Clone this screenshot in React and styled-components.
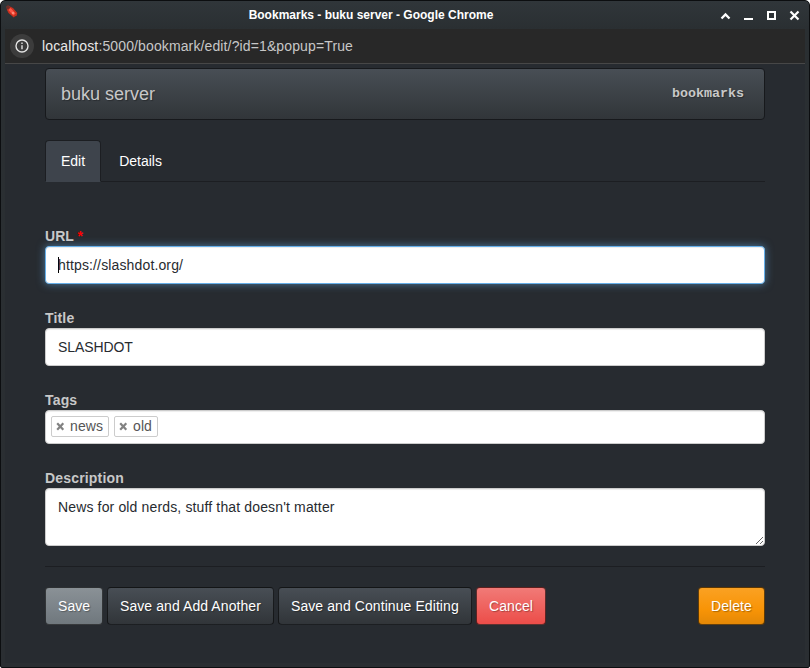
import React from "react";
import styled, { createGlobalStyle, css } from "styled-components";

const GlobalStyle = createGlobalStyle`
  *, *::before, *::after { box-sizing: border-box; }
  html { background: #fff; }
  body {
    margin: 0;
    font: 14px/20px "Liberation Sans", Arial, sans-serif;
    color: #c8c8c8;
  }
`;

const Window = styled.div`
  width: 810px;
  height: 668px;
  display: flex;
  flex-direction: column;
  padding: 0 4px 4px;
  border: 1px solid #0c0e10;
  border-radius: 5px 5px 2px 2px;
  background: linear-gradient(#30363a 0, #2a2f32 28px, #2a2e32 100%);
  overflow: hidden;
`;

const TitleBar = styled.header`
  flex: 0 0 28px;
  display: grid;
  grid-template-columns: 32px 1fr 100px;
  align-items: center;
`;

const TitleText = styled.div`
  text-align: center;
  font-size: 12px;
  line-height: 28px;
  font-weight: bold;
  color: #fff;
  white-space: nowrap;
`;

const BookmarkIcon = styled.svg`
  display: block;
  align-self: start;
  margin-top: 3px;
`;

const WindowControls = styled.svg`
  display: block;
  justify-self: end;
`;

const AddressBar = styled.div`
  flex: 0 0 35px;
  display: flex;
  align-items: center;
  gap: 8px;
  padding-left: 5px;
  background: #282828;
  border-bottom: 1px solid #474747;
`;

const InfoBadge = styled.span`
  width: 24px;
  height: 24px;
  display: grid;
  place-items: center;
  border-radius: 50%;
  background: #3c3c3c;
`;

const Address = styled.span`
  font-size: 14px;
  letter-spacing: 0.125px;
  color: #c7c7c7;
  b { font-weight: normal; color: #e8e8e8; }
`;

const Page = styled.main`
  flex: 1;
  padding: 4px 40px 0;
  background: #272b30;
`;

const Navbar = styled.nav`
  height: 52px;
  display: flex;
  align-items: center;
  justify-content: space-between;
  padding: 0 20px 0 15px;
  border: 1px solid #17191c;
  border-radius: 4px;
  background: linear-gradient(#484e55, #3a3f44 60%, #313539);
  text-shadow: 1px 1px 1px rgba(0, 0, 0, 0.3);
`;

const Brand = styled.span`
  font-size: 18px;
`;

const Database = styled.span`
  font: bold 13.33px/20px "Liberation Mono", monospace;
`;

const Tabs = styled.div`
  display: flex;
  gap: 2px;
  height: 42px;
  margin-top: 20px;
  border-bottom: 1px solid #1c1e22;
`;

const Tab = styled.a`
  height: 42px;
  padding: 10px 15px;
  border: 1px solid transparent;
  border-radius: 4px 4px 0 0;
  color: #fff;
  ${(p) => p.$active && css`
    background: #3e444c;
    border-color: #1c1e22;
    border-bottom-color: #3e444c;
  `}
`;

const Form = styled.form`
  margin: 44px 0 0;
`;

const Field = styled.div`
  margin-bottom: 24px;
  ${(p) => p.$last && css`margin-bottom: 20px;`}
`;

const Label = styled.label`
  display: block;
  font-weight: bold;
  letter-spacing: ${(p) => p.$tracking || "0.17px"};
`;

const Required = styled.strong`
  color: #f00;
`;

const control = css`
  display: block;
  width: 100%;
  margin: 0;
  padding: 8px 12px;
  border: 1px solid #ccc;
  border-radius: 4px;
  background: #fff;
  color: #272b30;
  font: 14px/20px "Liberation Sans", Arial, sans-serif;
  box-shadow: inset 0 1px 1px rgba(0, 0, 0, 0.075);
  outline: 0;
`;

const TextInput = styled.input`
  ${control}
  height: 38px;
  letter-spacing: -0.1px;
`;

const FocusedField = styled.div`
  ${control}
  height: 38px;
  border-color: #66afe9;
  box-shadow: inset 0 1px 1px rgba(0, 0, 0, 0.075), 0 0 8px rgba(102, 175, 233, 0.6);
  display: flex;
  align-items: center;
  letter-spacing: 0.14px;
`;

const Caret = styled.span`
  width: 1px;
  height: 16px;
  margin-right: -1px;
  background: #000;
`;

const TextArea = styled.textarea`
  ${control}
  height: 58px;
  resize: vertical;
  letter-spacing: 0.145px;
`;

const TagBox = styled.div`
  ${control}
  display: flex;
  gap: 5px;
  height: 34px;
  padding: 5px;
`;

const Tag = styled.span`
  display: flex;
  align-items: center;
  height: 21px;
  width: ${(p) => p.$width}px;
  padding: 0 0 0 4px;
  gap: 5px;
  border: 1px solid #ccc;
  border-radius: 2px;
  color: #555;
  line-height: 19px;
  letter-spacing: 0.1px;
`;

const Divider = styled.hr`
  margin: 0 0 20px;
  border: 0;
  border-top: 1px solid #1c1e22;
`;

const Actions = styled.div`
  display: flex;
  gap: 4px;
`;

const tones = {
  save: "linear-gradient(#8a9196, #7a8288 60%, #70787d)",
  plain: "linear-gradient(#484e55, #3a3f44 60%, #313539)",
  danger: "linear-gradient(#f17a77, #ee5f5b 60%, #ec4d49)",
  warning: "linear-gradient(#faa123, #f89406 60%, #e48806)",
};

const Button = styled.button`
  flex: none;
  width: ${(p) => p.$width}px;
  height: 38px;
  margin: 0;
  padding: 0 0 0 12px;
  text-align: left;
  border: 1px solid rgba(0, 0, 0, 0.6);
  border-radius: 4px;
  background: ${(p) => tones[p.$tone]};
  color: #fff;
  font: 14px/20px "Liberation Sans", Arial, sans-serif;
  letter-spacing: 0.08px;
  text-shadow: 1px 1px 1px rgba(0, 0, 0, 0.3);
  white-space: nowrap;
  ${(p) => p.$end && css`margin-left: auto;`}
`;

function TagItem({ width, children }) {
  return (
    <Tag $width={width}>
      <svg width="9" height="9" viewBox="0 0 9 9">
        <path d="M1.2 1.2 7.3 7.8M7.3 1.2 1.2 7.8" stroke="#828282" strokeWidth="2.2" />
      </svg>
      {children}
    </Tag>
  );
}

export default function App() {
  return (
    <>
      <GlobalStyle />
      <Window>
        <TitleBar>
          <BookmarkIcon width="14" height="15" viewBox="0 0 14 15">
            <path d="M1.500 2.500 3 1.500 8 4l4.300 5-.8 3-1.500.2-1.200 1.300L3.500 9 2 6Z" fill="#c8301f" />
            <path d="M4.500 5 9.500 10.500" stroke="#ff5545" strokeWidth="3" />
            <path d="M1.500 2.500 3 1.500 5.500 3 3 5.500 2 5Z" fill="#6e2f2a" />
            <circle cx="8" cy="9" r="1" fill="#ff9a86" />
          </BookmarkIcon>
          <TitleText>Bookmarks - buku server - Google Chrome</TitleText>
          <WindowControls width="90" height="28" viewBox="0 0 90 28" fill="none" stroke="#fff" strokeWidth="2">
            <path d="m6.500 17.500 4-4 4 4" strokeWidth="2.3" />
            <path d="M29 18h9" />
            <path d="M53 11h7v7h-7z" />
            <path d="m75.500 10.500 8 8m0-8-8 8" strokeWidth="2.2" />
          </WindowControls>
        </TitleBar>
        <AddressBar>
          <InfoBadge>
            <svg width="14" height="14" viewBox="0 0 14 14" fill="none" stroke="#e3e3e3" strokeWidth="1.4">
              <circle cx="7" cy="7" r="6" />
              <path d="M7 6.200v4M7 3.600v1.500" />
            </svg>
          </InfoBadge>
          <Address><b>localhost</b>:5000/bookmark/edit/?id=1&amp;popup=True</Address>
        </AddressBar>
        <Page>
          <Navbar>
            <Brand>buku server</Brand>
            <Database>bookmarks</Database>
          </Navbar>
          <Tabs>
            <Tab $active>Edit</Tab>
            <Tab>Details</Tab>
          </Tabs>
          <Form>
            <Field>
              <Label $tracking="0.05px">URL <Required>*</Required></Label>
              <FocusedField><Caret />https://slashdot.org/</FocusedField>
            </Field>
            <Field>
              <Label>Title</Label>
              <TextInput defaultValue="SLASHDOT" />
            </Field>
            <Field>
              <Label>Tags</Label>
              <TagBox>
                <TagItem width={58}>news</TagItem>
                <TagItem width={44}>old</TagItem>
              </TagBox>
            </Field>
            <Field $last>
              <Label>Description</Label>
              <TextArea defaultValue="News for old nerds, stuff that doesn't matter" />
            </Field>
            <Divider />
            <Actions>
              <Button type="button" $tone="save" $width={58}>Save</Button>
              <Button type="button" $tone="plain" $width={167}>Save and Add Another</Button>
              <Button type="button" $tone="plain" $width={194}>Save and Continue Editing</Button>
              <Button type="button" $tone="danger" $width={70}>Cancel</Button>
              <Button type="button" $tone="warning" $width={67} $end>Delete</Button>
            </Actions>
          </Form>
        </Page>
      </Window>
    </>
  );
}
